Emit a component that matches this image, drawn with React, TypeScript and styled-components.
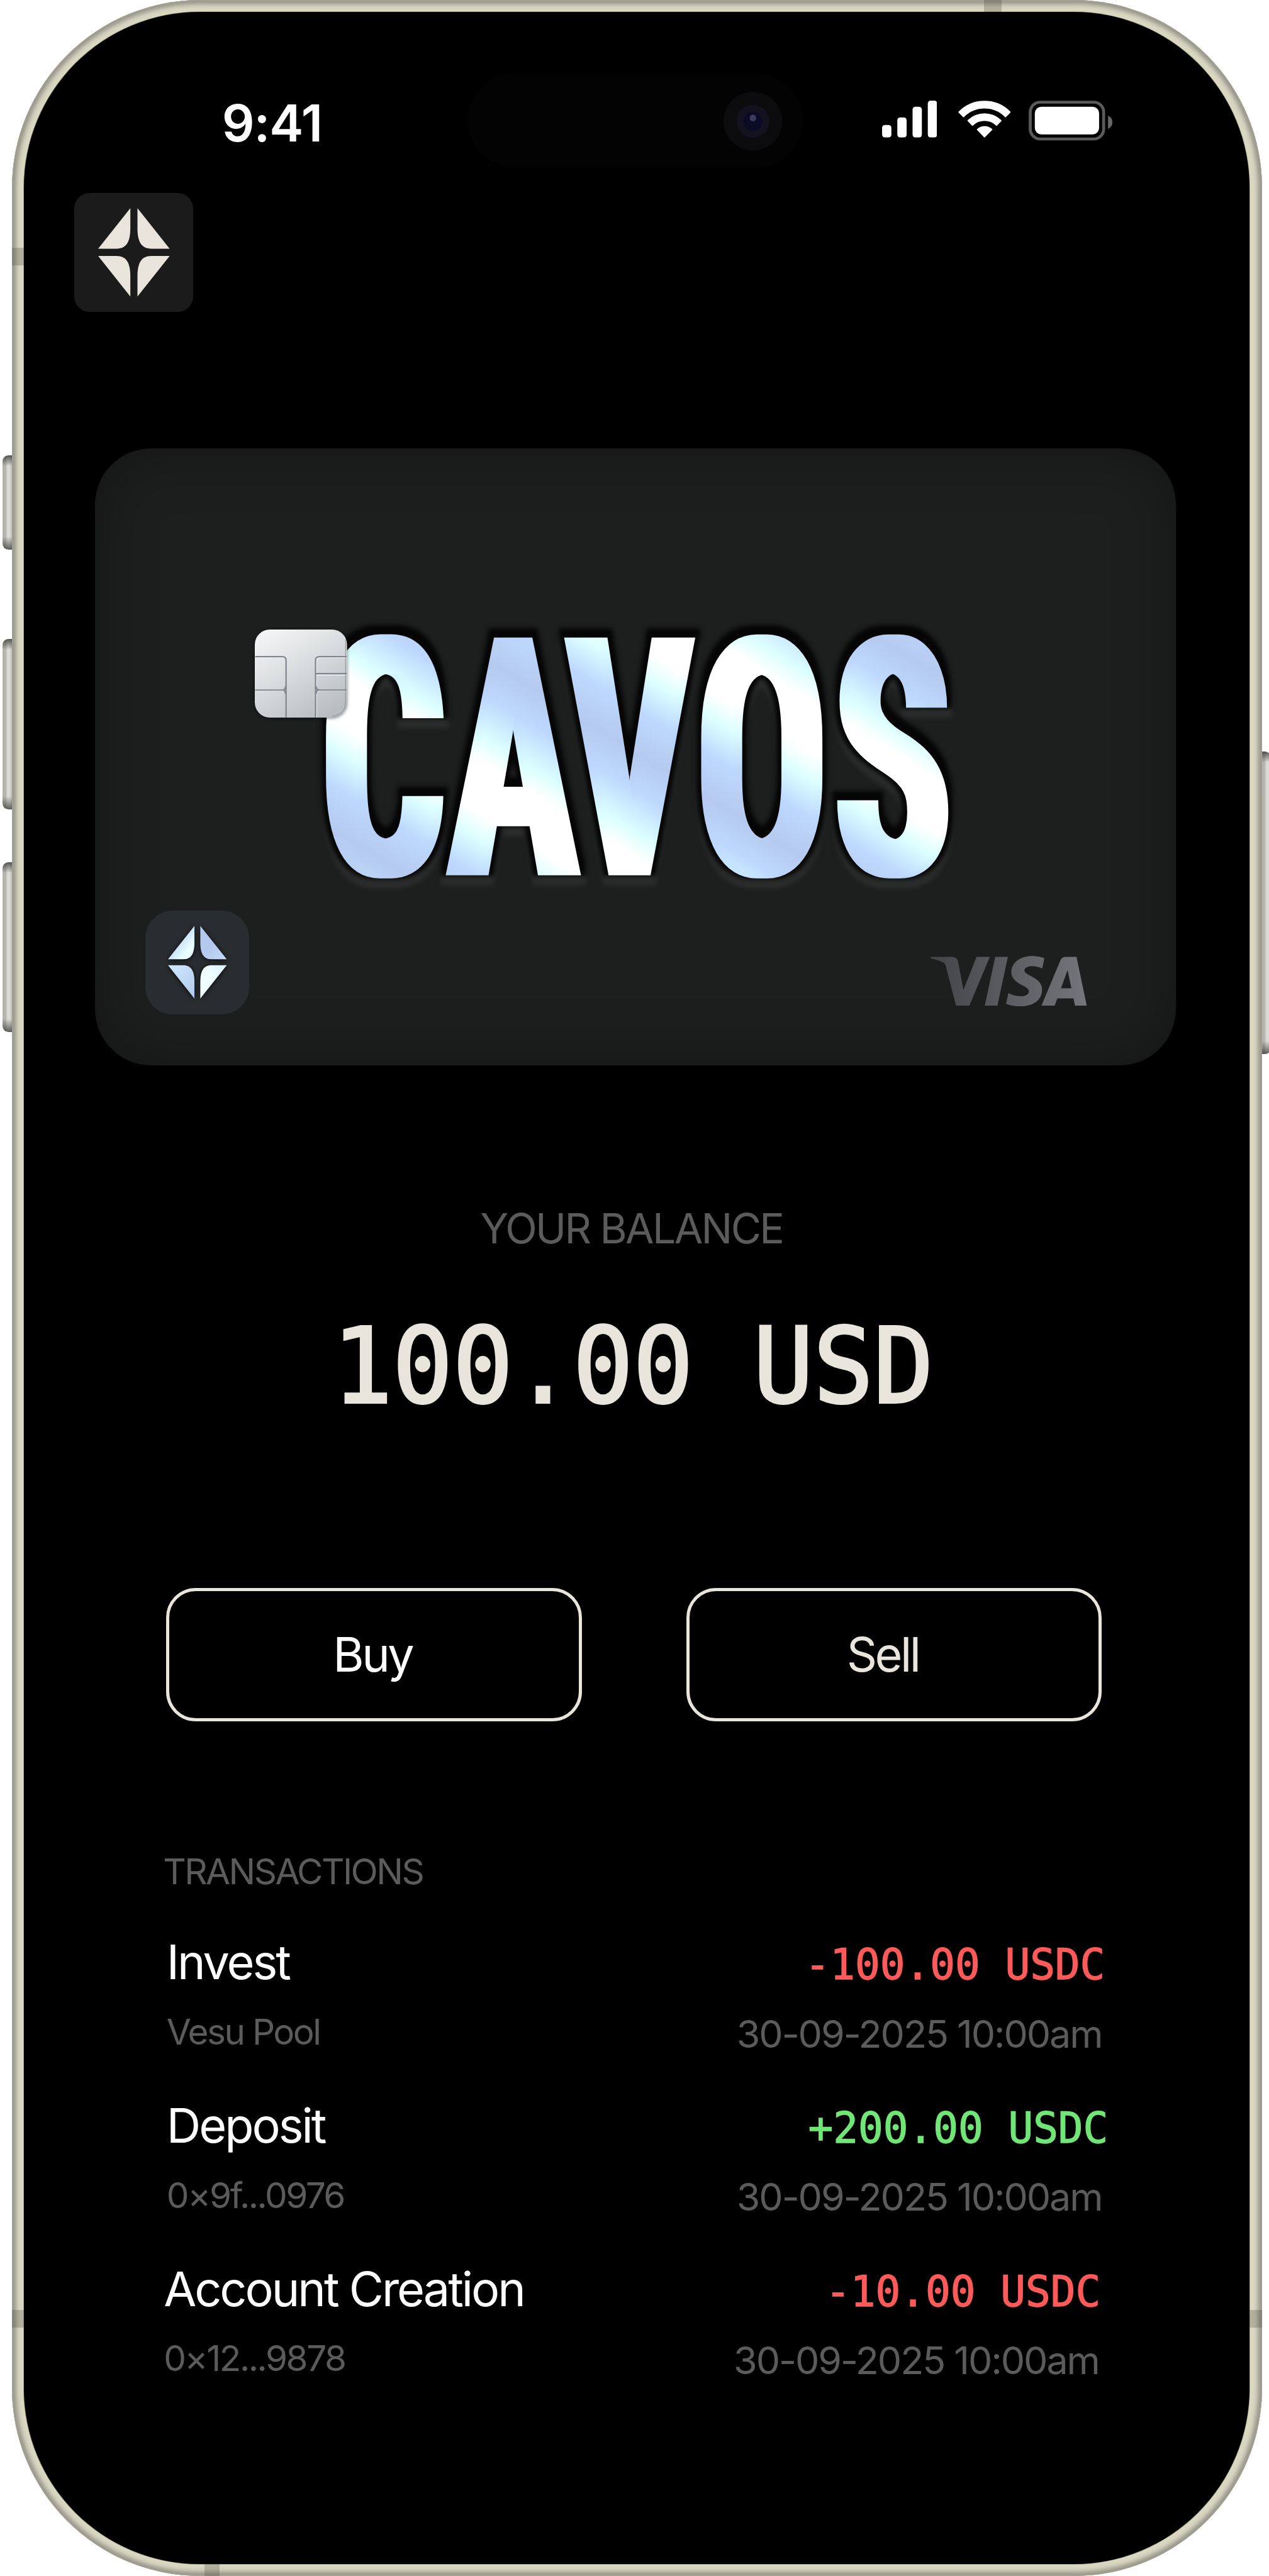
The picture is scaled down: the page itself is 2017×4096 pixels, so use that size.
import React from "react";
import styled, { createGlobalStyle } from "styled-components";
import { SiVisa } from "react-icons/si";

/* 1rem = 100 design units */
const Global = createGlobalStyle`
  html { font-size: 94.39px; }
  body { margin: 0; background: #fff; overflow: hidden; }
  *, *::before, *::after { box-sizing: border-box; }
`;

const ink = "#e9e5dc";
const muted = "#5b5b5b";

const Page = styled.main`
  position: relative;
  width: 2017px;
  height: 4096px;
  overflow: hidden;
  background: #fff;
  font-family: Inter, "Liberation Sans", sans-serif;
  color: #fff;
`;

const Frame = styled.div`
  position: relative;
  margin-left: 0.2rem;
  width: 21.05rem;
  height: 4096px;
  padding: 0.206rem;
  border-radius: 3.17rem;
  background: #dad8c1;
  box-shadow: inset 0 0 0.015rem 0.01rem #a8a596, inset 0 0 0.07rem 0.065rem #99968a,
    inset 0 0 0.09rem 0.09rem #cbc9bb;
`;

const Screen = styled.div`
  display: flex;
  flex-direction: column;
  width: 100%;
  height: 100%;
  border-radius: 2.96rem;
  background: #000;
  box-shadow: 0 0 0 0.008rem #93937a;
`;

const SideKey = styled.i<{ $top: number; $height: number; $right?: boolean }>`
  position: absolute;
  top: ${(p) => p.$top}rem;
  ${(p) => (p.$right ? "left: 21.245rem;" : "left: 0.04rem;")}
  width: 0.16rem;
  height: ${(p) => p.$height}rem;
  border-radius: ${(p) => (p.$right ? "0 0.1rem 0.1rem 0" : "0.1rem 0 0 0.1rem")};
  background: linear-gradient(180deg, rgba(60, 60, 58, 0.85) 0, rgba(60, 60, 58, 0) 0.18rem, rgba(60, 60, 58, 0) calc(100% - 0.22rem), rgba(60, 60, 58, 0.8) 100%),
    linear-gradient(90deg, #b4b3ad 0%, #b4b3ad 30%, #dddbd7 55%, #dddbd7 75%, #bdbcb6 100%);
`;

const Antenna = styled.i<{ $side: "top" | "bottom" | "left" | "right"; $at: number; $size: number }>`
  position: absolute;
  background: rgba(62, 58, 46, 0.25);
  ${(p) => (p.$side === "top" || p.$side === "bottom" ? `left: ${p.$at}rem; width: ${p.$size}rem; height: 0.206rem;` : `top: ${p.$at}rem; height: ${p.$size}rem; width: 0.206rem;`)}
  ${(p) => `${p.$side}: 0;`}
`;

const StatusBar = styled.header`
  display: grid;
  grid-template-columns: 7.464rem 5.65rem 1fr;
  align-items: start;
  height: 2.624rem;
`;

const Time = styled.time`
  padding: 1.376rem 0 0 3.33rem;
  font-size: 0.86rem;
  line-height: 1rem;
  font-weight: 600;
  letter-spacing: -0.013em;
`;

const Island = styled.div`
  display: flex;
  justify-content: flex-end;
  align-items: center;
  margin-top: 1.024rem;
  height: 1.6rem;
  padding: 0.02rem 0.345rem 0 0;
  border-radius: 0.8rem;
  background: #030303;
`;

const Lens = styled.svg`
  width: 0.99rem;
  height: 0.99rem;
`;

const Indicators = styled.div`
  display: flex;
  align-items: flex-start;
  padding: 1.491rem 0 0 1.333rem;
`;

const Glyph = styled.svg<{ $w: number; $h: number; $gap?: number }>`
  width: ${(p) => p.$w}rem;
  height: ${(p) => p.$h}rem;
  margin-right: ${(p) => p.$gap ?? 0}rem;
`;

const LogoTile = styled.div`
  display: grid;
  place-items: center;
  width: 2rem;
  height: 2rem;
  margin: 0.42rem 0 0 0.844rem;
  border-radius: 0.26rem;
  background: #1b1b1b;
`;

const Star = styled.svg<{ $w: number; $h: number; $shadow?: boolean }>`
  width: ${(p) => p.$w}rem;
  height: ${(p) => p.$h}rem;
  overflow: visible;
  filter: ${(p) => (p.$shadow ? "drop-shadow(0 0.02rem 0.04rem rgba(0, 0, 0, 0.9))" : "none")};
`;

const Card = styled.section`
  position: relative;
  width: 18.2rem;
  height: 10.4rem;
  margin: 2.3rem 0 0 1.194rem;
  border-radius: 0.95rem;
  background: #1d1f1e;
  box-shadow: inset 0 0 1rem rgba(0, 0, 0, 0.34);
`;

const Wordmark = styled.svg`
  display: block;
  width: 18.2rem;
  height: 7.79rem;
  overflow: visible;
  text {
    font-family: "Roboto Condensed", Roboto, "Liberation Sans", sans-serif;
    font-weight: 700;
    font-size: 563px;
  }
`;

const Chip = styled.svg`
  position: absolute;
  left: 2.693rem;
  top: 3.053rem;
  width: 1.553rem;
  height: 1.483rem;
  overflow: visible;
  filter: drop-shadow(0 0.02rem 0.03rem rgba(0, 0, 0, 0.5));
`;

const CardFooter = styled.div`
  display: flex;
  justify-content: space-between;
  align-items: flex-start;
  padding: 0 1.5rem 0 0.85rem;
`;

const Badge = styled.div`
  display: grid;
  place-items: center;
  width: 1.75rem;
  height: 1.745rem;
  border-radius: 0.46rem;
  background: #2a2d30;
`;

const Tones = styled.svg`
  position: absolute;
  width: 0;
  height: 0;
`;

const Visa = styled.div`
  display: flex;
  align-items: center;
  justify-content: center;
  width: 2.63rem;
  height: 0.85rem;
  margin-top: 0.76rem;
  overflow: hidden;
  svg {
    flex: none;
    width: 2.63rem;
    height: 2.63rem;
  }
  path {
    fill: url(#visaTone);
  }
`;

const BalanceLabel = styled.h2`
  margin: 2.395rem 0.18rem 0 0;
  font-size: 0.7rem;
  line-height: 0.7rem;
  font-weight: 400;
  letter-spacing: -0.04em;
  text-align: center;
  color: ${muted};
`;

const Mono = styled.span<{ $squeeze: number; $origin: string; $stroke: number }>`
  display: inline-block;
  font-family: "DejaVu Sans Mono", "Liberation Mono", monospace;
  white-space: pre;
  transform: scaleX(${(p) => p.$squeeze});
  transform-origin: ${(p) => p.$origin} center;
  -webkit-text-stroke: ${(p) => p.$stroke}rem currentColor;
`;

const Balance = styled.p`
  display: flex;
  justify-content: center;
  margin: 1.105rem 0.14rem 0 0;
  font-size: 1.75rem;
  line-height: 1.75rem;
  color: ${ink};
`;

const Actions = styled.div`
  display: flex;
  gap: 1.755rem;
  margin: 2.85rem 0 0 2.394rem;
`;

const ActionButton = styled.button<{ $tone: string; $nudge: number }>`
  width: 7rem;
  height: 2.25rem;
  padding: 0 ${(p) => p.$nudge}rem 0 0;
  border: 0.054rem solid ${ink};
  border-radius: 0.5rem;
  background: transparent;
  color: ${(p) => p.$tone};
  font: 400 0.8rem/0.8rem Inter, "Liberation Sans", sans-serif;
  letter-spacing: -0.047em;
`;

const SectionTitle = styled.h3`
  margin: 2.235rem 0 0 2.34rem;
  font-size: 0.6rem;
  line-height: 0.6rem;
  font-weight: 400;
  letter-spacing: -0.045em;
  color: ${muted};
`;

const List = styled.ul`
  list-style: none;
  margin: 0.822rem 0 0 2.4rem;
  padding: 0;
  width: 15.78rem;
`;

const Row = styled.li<{ $shift: number }>`
  display: flex;
  justify-content: space-between;
  align-items: flex-start;
  height: 2.75rem;
  margin-left: ${(p) => -p.$shift}rem;
  margin-right: ${(p) => p.$shift}rem;
`;

const Column = styled.div<{ $end?: boolean }>`
  display: flex;
  flex-direction: column;
  align-items: ${(p) => (p.$end ? "flex-end" : "flex-start")};
`;

const Name = styled.span`
  font-size: 0.8rem;
  line-height: 0.8rem;
  letter-spacing: -0.04em;
`;

const Source = styled.span`
  margin-top: 0.48rem;
  font-size: 0.6rem;
  line-height: 0.6rem;
  letter-spacing: -0.044em;
  color: ${muted};
`;

const Amount = styled.span<{ $credit?: boolean; $nudge: number }>`
  margin: 0.074rem ${(p) => -p.$nudge}rem 0 0;
  font-size: 0.725rem;
  line-height: 0.725rem;
  height: 0.725rem;
  color: ${(p) => (p.$credit ? "#70e676" : "#ff5a5a")};
`;

const Stamp = styled.span`
  margin: 0.486rem 0.03rem 0 0;
  font-size: 0.645rem;
  line-height: 0.645rem;
  letter-spacing: -0.034em;
  color: ${muted};
`;

const petal = "M54.2 0V34C54.2 56 48 68.3 31 68.3H0Z";

function StarMark({ w, h, fills, shadow }: { w: number; h: number; fills: string[]; shadow?: boolean }) {
  return (
    <Star $w={w} $h={h} $shadow={shadow} viewBox="0 0 120.4 148.9">
      <path d={petal} fill={fills[0]} />
      <path d={petal} fill={fills[1]} transform="translate(120.4 0) scale(-1 1)" />
      <path d={petal} fill={fills[2]} transform="translate(0 148.9) scale(1 -1)" />
      <path d={petal} fill={fills[3]} transform="translate(120.4 148.9) scale(-1 -1)" />
    </Star>
  );
}

const transactions = [
  { name: "Invest", source: "Vesu Pool", amount: "-100.00 USDC", date: "30-09-2025 10:00am", shift: 0, nudge: 0.02 },
  { name: "Deposit", source: "0×9f...0976", amount: "+200.00 USDC", date: "30-09-2025 10:00am", shift: 0, nudge: 0.07, credit: true },
  { name: "Account Creation", source: "0×12...9878", amount: "-10.00 USDC", date: "30-09-2025 10:00am", shift: 0.05, nudge: 0 },
];

export default function App() {
  return (
    <Page>
      <Global />
      <SideKey $top={7.67} $height={1.59} />
      <SideKey $top={10.76} $height={2.87} />
      <SideKey $top={14.52} $height={2.87} />
      <SideKey $top={12.66} $height={5.1} $right />
      <Frame>
        <Screen>
          <StatusBar>
            <Time>9:41</Time>
            <Island>
              <Lens viewBox="0 0 99 99">
                <circle cx="49.5" cy="49.5" r="49.5" fill="#0c0b0d" />
                <circle cx="49.5" cy="49.5" r="27.6" fill="#14121f" />
                <circle cx="49.5" cy="49.5" r="16" fill="#0c0b26" />
                <circle cx="49.5" cy="44" r="5.5" fill="#3d3a5c" />
              </Lens>
            </Island>
            <Indicators>
              <Glyph $w={0.927} $h={0.62} $gap={0.357} viewBox="0 0 278 186" fill="#fff">
                <rect x="0" y="123" width="47" height="63" rx="14" />
                <rect x="77" y="85" width="47" height="101" rx="14" />
                <rect x="154" y="31" width="47" height="155" rx="14" />
                <rect x="231" y="0" width="47" height="186" rx="14" />
              </Glyph>
              <Glyph $w={0.883} $h={0.62} $gap={0.303} viewBox="461 89 265 186" fill="#fff" stroke="#fff" strokeWidth="6" strokeLinejoin="round">
                <path d="M465 147A181 181 0 0 1 723 147L700 170A149 149 0 0 0 488 170Z" />
                <path d="M511 190A119 119 0 0 1 677 190L655 213A89 89 0 0 0 533 213Z" />
                <path d="M558 235A54 54 0 0 1 631 235L594 272Z" />
              </Glyph>
              <Glyph $w={1.413} $h={0.673} viewBox="817 89 424 202">
                <rect x="825" y="97" width="371" height="186" rx="50" fill="none" stroke="#5b5b5b" strokeWidth="15" />
                <rect x="848" y="120" width="325" height="140" rx="33" fill="#fff" />
                <path d="M1218 165C1233 172 1241 184 1241 198C1241 212 1233 225 1218 232Z" fill="#666" />
              </Glyph>
            </Indicators>
          </StatusBar>

          <LogoTile>
            <StarMark w={1.204} h={1.489} fills={[ink, ink, ink, ink]} />
          </LogoTile>

          <Card>
            <Wordmark viewBox="160 755 1820 779">
              <defs>
                <linearGradient
                  id="foil"
                  gradientUnits="userSpaceOnUse"
                  spreadMethod="repeat"
                  x1="0"
                  y1="153"
                  x2="-201"
                  y2="475"
                  gradientTransform="scale(1.5385 1) translate(-541 -1474)"
                >
                  <stop offset="0" stopColor="#b4c9ed" />
                  <stop offset="0.15" stopColor="#bed8fd" />
                  <stop offset="0.31" stopColor="#dcffff" />
                  <stop offset="0.4" stopColor="#fff" />
                  <stop offset="0.58" stopColor="#fff" />
                  <stop offset="0.68" stopColor="#dcffff" />
                  <stop offset="0.82" stopColor="#bed8fd" />
                  <stop offset="1" stopColor="#b4c9ed" />
                </linearGradient>
                <filter id="emboss" filterUnits="userSpaceOnUse" x="480" y="1000" width="1200" height="550" colorInterpolationFilters="sRGB">
                  <feMorphology in="SourceGraphic" operator="dilate" radius="8 0" result="bold" />
                  <feMorphology in="bold" operator="dilate" radius="8" result="wide" />
                  <feGaussianBlur in="wide" stdDeviation="4" result="soft" />
                  <feFlood floodColor="#2b2c2c" />
                  <feComposite in2="soft" operator="in" />
                  <feOffset dy="9" result="light" />
                  <feFlood floodColor="#050505" />
                  <feComposite in2="soft" operator="in" />
                  <feOffset dy="-7" result="dark" />
                  <feMerge>
                    <feMergeNode in="light" />
                    <feMergeNode in="dark" />
                    <feMergeNode in="bold" />
                  </feMerge>
                </filter>
              </defs>
              <g filter="url(#emboss)">
                <text transform="translate(541 1474) scale(0.65 1)" x="0 329.2 636.2 971.5 1329.2" y="0" fill="url(#foil)">
                  CAVOS
                </text>
              </g>
            </Wordmark>
            <Chip viewBox="88 61 466 445">
              <defs>
                <linearGradient id="steel" x1="0.1" y1="0" x2="0.75" y2="1">
                  <stop offset="0" stopColor="#f5f6f7" />
                  <stop offset="0.55" stopColor="#d5d8da" />
                  <stop offset="1" stopColor="#b9bdc0" />
                </linearGradient>
              </defs>
              <rect x="88" y="61" width="466" height="445" rx="76" fill="url(#steel)" />
              <g fill="none" stroke="#fff" strokeOpacity="0.8" strokeWidth="4" transform="translate(3 4)">
                <path d="M90 199H224Q243 199 243 216V346Q243 366 224 366H90M224 368Q243 368 243 386V502" />
                <path d="M550 199H416Q397 199 397 216V346Q397 366 416 366H550M397 287H550M416 368Q397 368 397 386V502" />
              </g>
              <g fill="none" stroke="#7f868e" strokeWidth="7">
                <path d="M90 198H226Q246 198 246 216V505M90 367H226Q243 367 243 348M226 367Q243 367 243 386" />
                <path d="M553 198H416Q395 198 395 216V505M397 284H553M553 367H416Q398 367 398 348M416 367Q398 367 398 386" />
              </g>
              <path d="M547 110V430Q545 490 480 501" fill="none" stroke="#7d848b" strokeWidth="4" strokeOpacity="0.7" />
            </Chip>
            <CardFooter>
              <Badge>
                <StarMark w={0.99} h={1.23} shadow fills={["url(#petalA)", "url(#petalB)", "url(#petalC)", "url(#petalD)"]} />
                <Tones>
                  <defs>
                    <linearGradient id="petalA" x1="0" y1="0" x2="1" y2="1">
                      <stop offset="0.45" stopColor="#c6dffd" />
                      <stop offset="0.75" stopColor="#eaffff" />
                    </linearGradient>
                    <linearGradient id="petalB" x1="0" y1="1" x2="1" y2="0">
                      <stop offset="0" stopColor="#c4dcfb" />
                      <stop offset="0.5" stopColor="#b4c9ed" />
                    </linearGradient>
                    <linearGradient id="petalC" x1="0" y1="1" x2="1" y2="0">
                      <stop offset="0" stopColor="#cdeaff" />
                      <stop offset="1" stopColor="#b4c9ed" />
                    </linearGradient>
                    <linearGradient id="petalD" x1="0" y1="1" x2="1" y2="0">
                      <stop offset="0" stopColor="#d8f4ff" />
                      <stop offset="0.5" stopColor="#efffff" />
                    </linearGradient>
                    <linearGradient id="visaTone" gradientUnits="userSpaceOnUse" x1="0" y1="0" x2="24" y2="0">
                      <stop offset="0" stopColor="#434448" />
                      <stop offset="1" stopColor="#757679" />
                    </linearGradient>
                  </defs>
                </Tones>
              </Badge>
              <Visa>
                <SiVisa />
              </Visa>
            </CardFooter>
          </Card>

          <BalanceLabel>YOUR BALANCE</BalanceLabel>
          <Balance>
            <Mono $squeeze={0.9606} $origin="center" $stroke={0.04}>100.00 USD</Mono>
          </Balance>

          <Actions>
            <ActionButton $tone="#fff" $nudge={0.05}>Buy</ActionButton>
            <ActionButton $tone={ink} $nudge={0.38}>Sell</ActionButton>
          </Actions>

          <SectionTitle>TRANSACTIONS</SectionTitle>
          <List>
            {transactions.map((t) => (
              <Row key={t.name} $shift={t.shift}>
                <Column>
                  <Name>{t.name}</Name>
                  <Source>{t.source}</Source>
                </Column>
                <Column $end>
                  <Amount $credit={t.credit} $nudge={t.nudge}>
                    <Mono $squeeze={0.9645} $origin="right" $stroke={0.014}>{t.amount}</Mono>
                  </Amount>
                  <Stamp>{t.date}</Stamp>
                </Column>
              </Row>
            ))}
          </List>
        </Screen>
        <Antenna $side="top" $at={16.37} $size={0.3} />
        <Antenna $side="bottom" $at={3.24} $size={0.26} />
        <Antenna $side="left" $at={4.17} $size={0.305} />
        <Antenna $side="left" $at={38.91} $size={0.305} />
        <Antenna $side="right" $at={38.91} $size={0.305} />
      </Frame>
    </Page>
  );
}
